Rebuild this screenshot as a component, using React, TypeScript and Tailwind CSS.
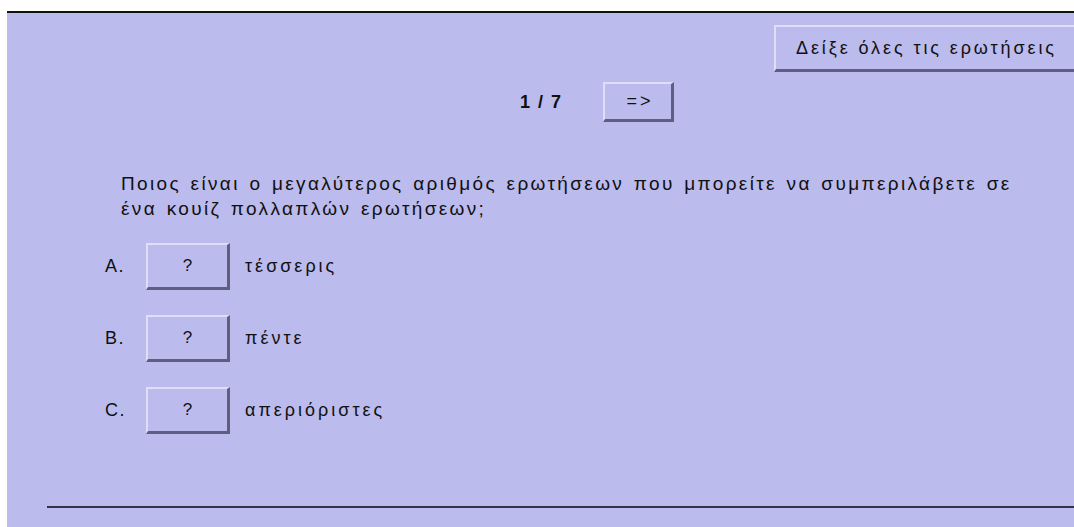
import React from "react";

const font = { fontFamily: '"Liberation Sans", Arial, sans-serif' };

function Bevel({
  className,
  children,
}: {
  className: string;
  children: React.ReactNode;
}) {
  return (
    <div
      className={
        "flex items-center bg-[#bbbbed] border-t-2 border-l-2 border-t-[#dedef8] border-l-[#dedef8] border-b-[3px] border-r-[3px] border-b-[#5e5e82] border-r-[#5e5e82] text-[#111] " +
        className
      }
    >
      {children}
    </div>
  );
}

const options = [
  { key: "A.", text: "τέσσερις" },
  { key: "B.", text: "πέντε" },
  { key: "C.", text: "απεριόριστες" },
];

export default function App() {
  return (
    <div
      className="w-[1074px] h-[527px] bg-white pt-[11px] pl-[7px] overflow-hidden"
      style={font}
    >
      <div className="h-[516px] bg-[#bbbbed] border-t-2 border-[#111] overflow-hidden flex flex-col text-[#111]">
        <div className="flex justify-end mt-[12px]">
          <Bevel className="w-[306px] h-[47px] -mr-[6px] pl-[20px] text-[18px] tracking-[2.9px]">
            Δείξε όλες τις ερωτήσεις
          </Bevel>
        </div>

        <div className="flex items-center mt-[10px] pl-[513px]">
          <span className="font-bold text-[18px] tracking-[1.5px] w-[83px]">1 / 7</span>
          <Bevel className="w-[71px] h-[40px] justify-center text-[18px] tracking-[3px]">
            <span className="ml-[4px]">=&gt;</span>
          </Bevel>
        </div>

        <p className="mt-[49px] ml-[114px] whitespace-nowrap text-[19px] leading-[25px] tracking-[2.35px] [word-spacing:2px]">
          Ποιος είναι ο μεγαλύτερος αριθμός ερωτήσεων που μπορείτε να συμπεριλάβετε σε
          <br />
          ένα κουίζ πολλαπλών ερωτήσεων;
        </p>

        <div className="flex flex-col gap-[25px] mt-[22px] ml-[98px]">
          {options.map((o) => (
            <div key={o.key} className="flex items-center h-[47px]">
              <span className="w-[41px] text-[18px] tracking-[1.5px]">{o.key}</span>
              <Bevel className="w-[84px] h-[47px] justify-center text-[17px]">?</Bevel>
              <span className="ml-[15px] text-[18px] tracking-[3px]">{o.text}</span>
            </div>
          ))}
        </div>

        <div className="mt-auto mb-[19px] ml-[40px] h-[2px] bg-[#333348]" />
      </div>
    </div>
  );
}
